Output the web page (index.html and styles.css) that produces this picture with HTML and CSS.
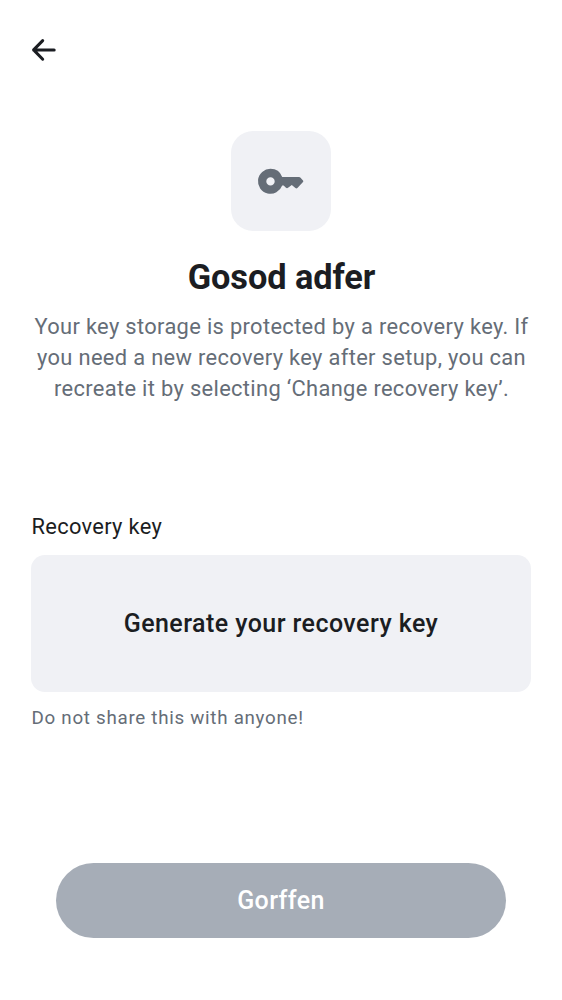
FILE: index.html
```
<!DOCTYPE html>
<html lang="cy">
<head>
<meta charset="utf-8">
<title>Gosod adfer</title>
<link rel="stylesheet" href="styles.css">
</head>
<body>
<main class="screen">
  <header class="topbar">
    <svg class="back" viewBox="0 0 25 24" role="img" aria-label="Back"><path d="M11.7 2.600 2.600 11.900l9.100 9.300M2.600 11.900H23.200"/></svg>
  </header>
  <section class="intro">
    <div class="tile">
      <svg class="key" viewBox="0 0 46 26" aria-hidden="true"><path fill-rule="evenodd" d="M12.500 0.800A12.500 12.500 0 0 1 24.200 9H41.100Q41.800 9 42.300 9.500L45 12.500Q45.700 13.300 45 14.100L39.400 20Q38.400 20.900 37.400 20L33.800 17L30 19.800Q29 20.500 28 19.800L25.600 17.600H24.200A12.500 12.500 0 1 1 12.500 0.800ZM12.500 9.200a4.200 4.200 0 1 0 0 8.400a4.200 4.200 0 0 0 0-8.400Z"/></svg>
    </div>
    <h1 class="title">Gosod adfer</h1>
    <p class="lead">Your key storage is protected by a recovery key. If<br>you need a new recovery key after setup, you can<br>recreate it by selecting ‘Change recovery key’.</p>
  </section>
  <section class="field">
    <h2 class="label">Recovery key</h2>
    <button class="generate">Generate your recovery key</button>
    <p class="hint">Do not share this with anyone!</p>
  </section>
  <footer class="footer"><button class="done" disabled>Gorffen</button></footer>
</main>
</body>
</html>
```
FILE: styles.css
```
* { box-sizing: border-box; margin: 0; }
body { background: #fff; color: #1b1d22; font-family: Roboto, sans-serif; }
.screen { width: 562px; height: 1000px; display: flex; flex-direction: column; }
.topbar { height: 131px; padding: 38px 31px; }
.back { display: block; width: 25px; height: 24px; fill: none; stroke: #1b1d22; stroke-width: 3; stroke-linecap: round; stroke-linejoin: round; }
.intro { display: flex; flex-direction: column; align-items: center; }
.tile { width: 100px; height: 100px; border-radius: 22px; background: #f0f1f5; display: flex; align-items: center; justify-content: center; }
.key { width: 46px; height: 26px; overflow: visible; fill: #656d77; }
.title { margin-top: 25px; padding-left: 1px; font-size: 34.375px; line-height: 42px; font-weight: 700; letter-spacing: -.07px; white-space: nowrap; }
.lead { margin-top: 13px; padding-left: 1px; font-size: 21.875px; line-height: 31px; letter-spacing: .34px; color: #656d77; text-align: center; white-space: nowrap; }
.field { margin-top: 107px; padding: 0 31px; }
.label { padding-left: .5px; font-size: 21.875px; line-height: 31px; font-weight: 400; letter-spacing: .31px; }
.generate { display: block; width: 100%; height: 137px; margin-top: 13px; padding: 0; border: 0; border-radius: 14px; background: #f0f1f5; color: #1b1d22; font: 500 25px Roboto, sans-serif; letter-spacing: .44px; }
.hint { margin-top: 13px; padding-left: .5px; font-size: 18.75px; line-height: 26px; letter-spacing: .72px; color: #656d77; }
.footer { margin-top: auto; padding: 0 56px 62.5px; }
.done { display: block; width: 100%; height: 75px; padding: 0; border: 0; border-radius: 38px; background: #a6adb7; color: #fff; font: 500 25px Roboto, sans-serif; letter-spacing: .4px; }
```
